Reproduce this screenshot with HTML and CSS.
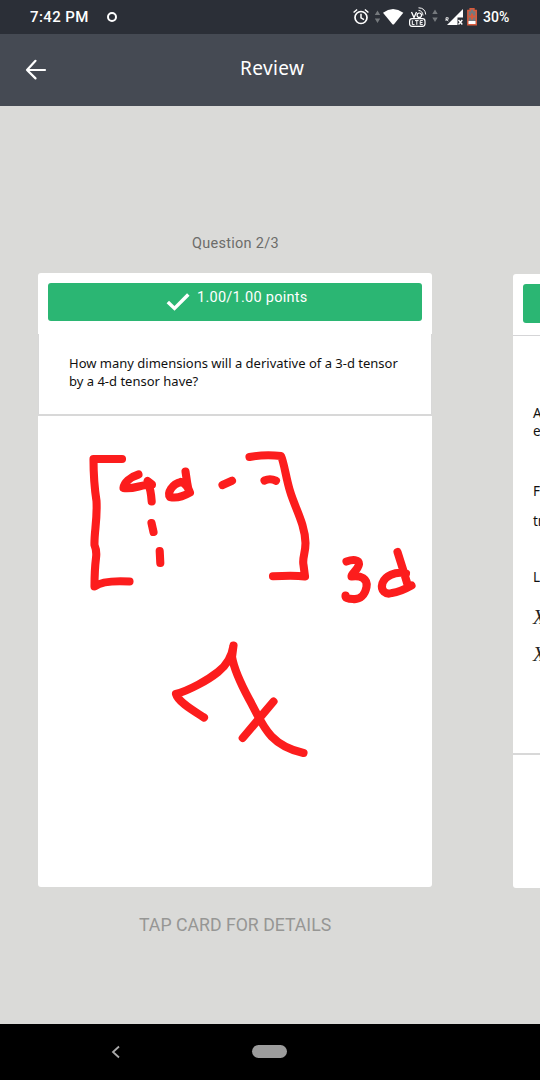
FILE: index.html
```
<!DOCTYPE html>
<html lang="en">
<head>
<meta charset="utf-8">
<title>Review</title>
<link rel="stylesheet" href="styles.css">
</head>
<body>
<div class="status">
  <span class="clock">7:42 PM</span>
  <span class="ring"></span>
  <svg class="status-icons" width="130" height="34" viewBox="350 0 130 34" fill="none" stroke="#fff">
    <circle cx="361" cy="17.5" r="6" stroke-width="1.7"/>
    <path d="M361 13.8v4l3 1.800M353.600 12.500l3.500-3M368.400 12.500l-3.500-3" stroke-width="1.5"/>
    <path d="M374.800 15l2.700-4.500 2.700 4.500zM374.800 18.500h5.400l-2.700 4.500zM432.300 14l2.700-4.500 2.700 4.500zM432.300 17.500h5.400l-2.700 4.500z" fill="#75797d" stroke="none"/>
    <path d="M383 12.700Q393 5.500 403.300 12.700L394.200 24q-1 1-2 0z" fill="#fff" stroke="none"/>
    <path d="M411.500 12l2.500 5.600 2.500-5.600" stroke-width="1.3"/>
    <circle cx="419.300" cy="15.200" r="2.200" stroke-width="1.2"/>
    <path d="M418.500 10.400Q422.600 10.700 423 15.500M418.500 7.800Q425.300 8 425.700 14.500" stroke-width="1"/>
    <rect x="409.600" y="18.700" width="15.400" height="7.600" rx="2.500" stroke-width="1.2"/>
    <path d="M412.300 20.400v4.200h2.200M415 20.600h3.600M416.800 20.600v4.200M422.800 20.600h-2.600v4h2.600M420.200 22.600h2.300" stroke-width="1"/>
    <path d="M463 9v8.500h-5.500V25H447z" fill="#fff" stroke="none"/>
    <path d="M458.500 20l3.800 4.500M462.300 20l-3.800 4.500" stroke-width="1.4"/>
    <path d="M446 21v-3.300h2.200v1.600H446l2.400 1.800" stroke-width=".8"/>
    <path d="M467.900 10.500h2.300v-1.800h3.700v1.800h2.300V24.700h-8.300z" fill="#74797e" stroke="#d85b3c" stroke-width="1.6"/>
    <path d="M468.500 21h7v3h-7z" fill="#fff" stroke="none"/>
    <path d="M472 13.500v6M469 16.500h6" stroke="#d85b3c" stroke-width="1.900"/>
  </svg>
  <span class="battery">30%</span>
</div>
<header class="header">
  <svg class="back" width="22" height="22" viewBox="0 0 22 22" fill="none" stroke="#fff" stroke-width="2.2" stroke-linecap="round" stroke-linejoin="round"><path d="M10.500 1.800L2 11l8.500 8.400M2 11h18"/></svg>
  <h1 class="title">Review</h1>
</header>
<main class="main">
  <p class="counter">Question 2/3</p>
  <div class="cards">
    <section class="card">
      <div class="score">
        <svg class="check" width="24" height="20" viewBox="0 0 24 20" fill="none" stroke="#fff" stroke-width="3.5"><path d="M1.800 10l6.700 6.400L22.300 2.500"/></svg>
        <span class="points">1.00/1.00 points</span>
      </div>
      <div class="question"><span class="line">How many dimensions will a derivative of a 3-d tensor</span><span class="line">by a 4-d tensor have?</span></div>
      <svg class="sketch" width="394" height="471" viewBox="38 416 394 471" fill="none" stroke="#fc1d1d" stroke-width="8.1" stroke-linecap="round" stroke-linejoin="round">
        <path d="M122 459H93.500Q93.500 482 96.500 501C97.500 520 94 533 94.500 545Q97 551 96 558C94.500 570 94.500 577 94.500 586.500Q103 580 129.500 581.500"/>
        <path d="M138.500 474.500C130 477 124 483 123.500 488C133 490 142 484 152 484.500L147.500 481Q151 490 151.700 501.500"/>
        <path d="M185.500 471.500Q187 483 189 492.500M181 482C172 484 167 493 170 497C176 498.500 184 496 190 492.500Q187 484 181 482"/>
        <path d="M222.500 485L232 480.700M264.500 480.500Q270 478 276 480.700M151.500 523L153.500 532M159.700 551L160.300 563"/>
        <path d="M249.500 457Q265 454 281 456C284 462 286 478 290 491C295 508 305 524 305.500 543C305.500 554 302 558 303.500 565L305 576.500Q294 575 273 576.300"/>
        <path d="M346.500 561.500C353 559 359 559.500 359 564C358 570 351 574 351.500 576.500C361 575 368 579 366.500 587C365 595 360 600 353 599Q345 599 345.500 595.500"/>
        <path d="M397.500 552Q403 569 408 586M406 573.500C395 571 385 576 382.500 583C380 591 386 595 392 593Q400 592 411.500 585.500"/>
        <path d="M204 717.500C194 711 178 702 176 694C190 690 208 680 218 672Q231 662 233.500 645.500L232 657C234 669 242 686 249 699C262 722 267 745 303.500 753M273.500 701.500L242.700 738"/>
      </svg>
    </section>
    <section class="card next">
      <div class="score next-score"></div>
      <div class="next-question">
        <span class="next-line">A</span>
        <span class="next-line">e</span>
        <span class="next-line f">F</span>
        <span class="next-line t">tr</span>
        <span class="next-line l">L</span>
        <span class="math">X</span>
        <span class="math x2">X</span>
      </div>
    </section>
  </div>
  <p class="hint">TAP CARD FOR DETAILS</p>
</main>
<nav class="nav">
  <svg class="nav-back" width="10" height="14" viewBox="0 0 10 14" fill="none" stroke="#aaa" stroke-width="1.8"><path d="M8 1.500L2 7l6 5.500"/></svg>
  <span class="home"></span>
</nav>
</body>
</html>
```
FILE: styles.css
```
* { box-sizing: border-box; }
body { margin: 0; width: 540px; height: 1080px; overflow: hidden; display: flex; flex-direction: column; font-family: Roboto, sans-serif; background: #dadad8; }
h1, p { margin: 0; font-weight: 400; }
svg { display: block; flex: none; }
.status { height: 34px; flex: none; display: flex; align-items: center; background: #2b2f37; color: #fff; }
.clock { width: 59px; margin-left: 30px; font-size: 15px; font-weight: 500; letter-spacing: .4px; white-space: nowrap; line-height: 34px; }
.ring { width: 10px; height: 10px; margin-left: 18px; border: 2px solid #fff; border-radius: 50%; }
.status-icons { margin-left: 233px; }
.battery { margin-left: 3px; font-size: 14px; font-weight: 500; line-height: 34px; }
.header { height: 72px; flex: none; display: flex; align-items: flex-start; background: #454a53; color: #fff; }
.back { margin: 25px 0 0 25px; }
.title { margin: 20px 0 0 193px; font: 400 19px/28px "Noto Sans", sans-serif; letter-spacing: .4px; }
.main { height: 918px; flex: none; display: flex; flex-direction: column; }
.counter { padding: 128px 0 0 192px; font-size: 14.5px; line-height: 20px; letter-spacing: .27px; color: #6c6c6a; }
.cards { display: flex; gap: 81px; width: 502px; height: 615px; margin: 19px 0 0 38px; align-items: flex-start; overflow: hidden; }
.card { width: 394px; height: 614px; flex: none; padding-top: 10px; border-radius: 3px; background: #fff; overflow: hidden; }
.score { display: flex; height: 38px; margin: 0 10px; background: #2bb673; border-radius: 3px; color: #fff; }
.check { margin: 9px 0 0 118px; }
.points { margin: 6px 0 0 7px; font-size: 14.5px; line-height: 18px; letter-spacing: .27px; white-space: nowrap; }
.question { height: 82px; margin-top: 13px; padding: 20px 0 0 30px; border: 1px solid #d8d8d8; border-top: 0; border-bottom-width: 2px; font: 13px/18px "Noto Sans", sans-serif; color: #111; white-space: nowrap; }
.line { display: block; }
.next { width: 27px; margin-top: 1px; border-radius: 3px 0 0 3px; }
.next-score { height: 39px; margin-right: 0; border-radius: 3px 0 0 3px; }
.next-question { height: 420px; margin-top: 12px; padding: 68px 0 0 20px; border-top: 1px solid #d5d5d7; border-bottom: 2px solid #d8d8d8; }
.next-line { display: block; height: 18px; font: 13.5px/18px "Noto Sans", sans-serif; color: #111; white-space: nowrap; }
.f { margin-top: 42px; }
.t { margin-top: 12px; }
.l { margin-top: 38px; }
.math { display: block; margin-top: 21px; height: 20px; font: italic 20px/20px "Liberation Serif", serif; color: #222; }
.x2 { margin-top: 17px; }
.hint { padding: 25px 0 0 139px; font-size: 17.7px; line-height: 24px; color: #969694; white-space: nowrap; }
.nav { height: 56px; flex: none; display: flex; align-items: center; background: #000; }
.nav-back { margin-left: 111px; }
.home { width: 35px; height: 13px; margin: -1px 0 0 131px; border-radius: 7px; background: #9c9c9c; }
```
